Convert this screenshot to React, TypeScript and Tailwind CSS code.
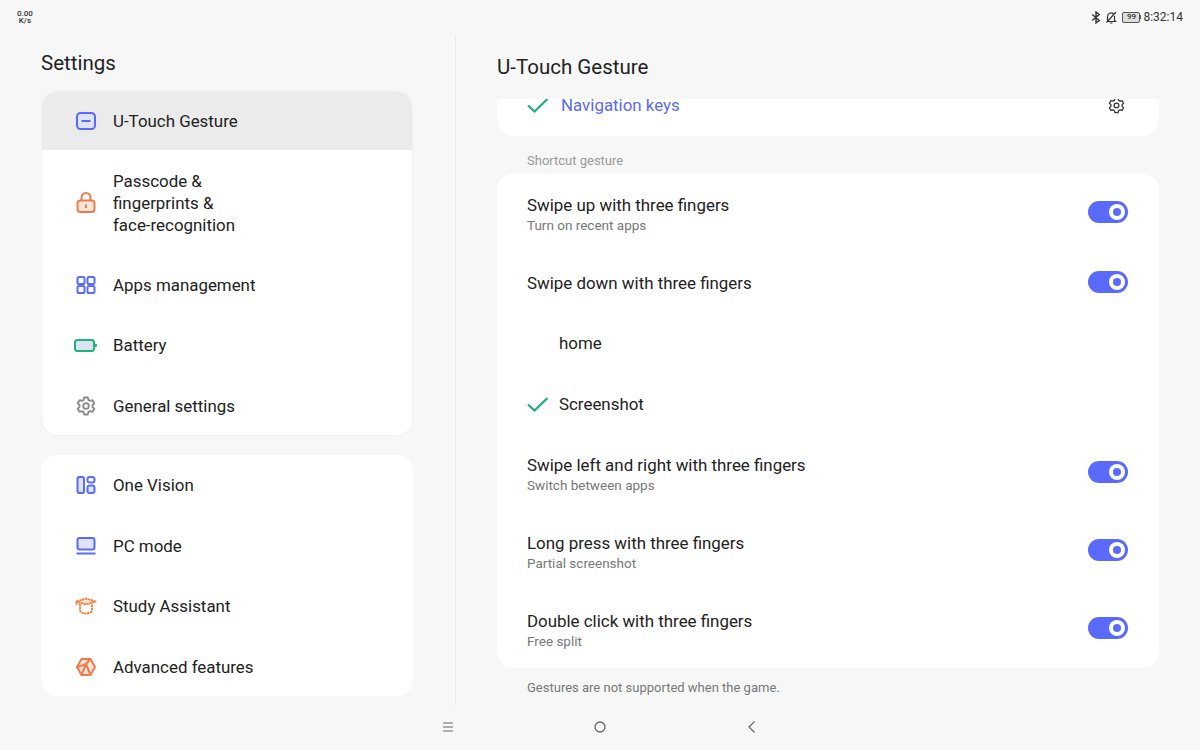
import React from 'react';

const BLUE = '#5a6bfb';

const IconGesture = () => (
  <svg width="20" height="18" viewBox="0 0 20 18" fill="none">
    <rect x="1" y="1" width="18" height="16" rx="3.5" fill="#dfe3fd" stroke={BLUE} strokeWidth="2" />
    <path d="M5.500 9h9" stroke={BLUE} strokeWidth="2" />
  </svg>
);

const IconLock = () => (
  <svg width="20" height="21" viewBox="0 0 20 21" fill="none">
    <path d="M5.500 9V5.500a4.500 4.500 0 0 1 9 0V9" stroke="#ee7b4d" strokeWidth="2" />
    <rect x="1.500" y="8.500" width="17" height="11.500" rx="3" fill="#fbe6d9" stroke="#ee7b4d" strokeWidth="2" />
    <path d="M10 12.500v3.500" stroke="#ee7b4d" strokeWidth="2" />
  </svg>
);

const IconApps = () => (
  <svg width="20" height="18" viewBox="0 0 20 18" fill="none" stroke={BLUE} strokeWidth="2">
    <rect x="1.500" y="1" width="7" height="7" rx="1.600" />
    <rect x="11.500" y="1" width="7" height="7" rx="1.600" />
    <rect x="1.500" y="10" width="7" height="7" rx="1.600" />
    <rect x="11.500" y="10" width="7" height="7" rx="1.600" />
  </svg>
);

const IconBattery = () => (
  <svg width="23" height="13" viewBox="0 0 23 13" fill="none">
    <rect x="1" y="1" width="19" height="11" rx="2.500" fill="#dde3ee" stroke="#21b07c" strokeWidth="2" />
    <path d="M21 4.500l2 1v2l-2 1z" fill="#21b07c" />
  </svg>
);

const IconGear = ({ color, size, sw }: { color: string; size: number; sw: number }) => (
  <svg width={size} height={size} viewBox="0 0 20 20" fill="none" stroke={color} strokeWidth={sw} strokeLinejoin="round">
    <path d="M8.200 1.500h3.600l.6 2.400 1.700 1 2.400-.7 1.800 3.100-1.800 1.700v2l1.800 1.700-1.800 3.100-2.400-.7-1.700 1-.6 2.400H8.200l-.6-2.400-1.700-1-2.400.7-1.800-3.100 1.800-1.700v-2L1.700 7.300l1.800-3.100 2.400.7 1.700-1z" />
    <circle cx="10" cy="10" r="2.800" />
  </svg>
);

const IconVision = () => (
  <svg width="20" height="18" viewBox="0 0 20 18" fill="none" stroke={BLUE} strokeWidth="2">
    <rect x="1.500" y="1" width="6.500" height="16" rx="1.800" fill="#dfe3fd" />
    <rect x="11.500" y="1" width="7" height="5.500" rx="2.200" />
    <rect x="11.500" y="9.500" width="7" height="7.500" rx="2" fill="#dfe3fd" />
  </svg>
);

const IconLaptop = () => (
  <svg width="20" height="18" viewBox="0 0 20 18" fill="none" stroke={BLUE} strokeWidth="2">
    <rect x="1.500" y="1" width="17" height="11.500" rx="2.200" fill="#dfe3fd" />
    <path d="M0.500 16.500h19" />
  </svg>
);

const IconStudy = () => (
  <svg width="22" height="18" viewBox="0 0 22 18" fill="none" stroke="#f2854a" strokeWidth="2" strokeDasharray="2.500 0.500" strokeLinejoin="round">
    <path d="M1.500 4.500L11 1.500l9.500 3-9.500 3z" fill="#fde6d6" />
    <path d="M5 6.500v6.300a3 3 0 0 0 1.500 2.500c2.800 1.600 6.200 1.600 9 0a3 3 0 0 0 1.500-2.500V6.500" />
    <path d="M1.500 4.500v4" />
  </svg>
);

const IconCube = () => (
  <svg width="20" height="18" viewBox="0 0 20 18" fill="none" stroke="#ee7b4d" strokeWidth="2" strokeLinejoin="round">
    <path d="M5.500 1h9L19 9l-4.500 8h-9L1 9z" fill="#fde6d6" />
    <path d="M1.500 9l8.500-3 4.500-5M10 6l4.500 11M10 6L5.500 17" />
  </svg>
);

const Check = () => (
  <svg width="22" height="15" viewBox="0 0 22 15" fill="none" className="shrink-0">
    <path d="M1 7.500l6.500 6L20.500 1" stroke="#1fae7a" strokeWidth="2.200" />
  </svg>
);

const Toggle = () => (
  <div className="-mt-[2px] flex h-[22px] w-10 items-center justify-end rounded-full bg-[#5a6bfb] pr-[3px]">
    <div className="flex h-4 w-4 items-center justify-center rounded-full bg-white">
      <div className="h-2 w-2 rounded-full bg-[#5a6bfb]" />
    </div>
  </div>
);

const NavRow = ({ icon, label, h, active }: { icon: React.ReactNode; label: React.ReactNode; h: string; active?: boolean }) => (
  <div className={`flex items-center ${h} ${active ? 'bg-[#ebebeb]' : ''}`}>
    <div className="flex w-[71px] shrink-0 items-center justify-center pl-[26px] pr-[10px]">{icon}</div>
    <div className="text-[16.900px] leading-[22px] text-[#222222]">{label}</div>
  </div>
);

const GestureRow = ({ title, sub, h }: { title: string; sub?: string; h: string }) => (
  <div className={`flex items-center justify-between pl-[30px] pr-[31px] ${h}`}>
    <div className={sub ? 'pt-[2px]' : ''}>
      <div className="text-[16.900px] leading-[22px] text-[#222222]">{title}</div>
      {sub && <div className="text-[13.500px] leading-[18px] text-[#777777]">{sub}</div>}
    </div>
    <Toggle />
  </div>
);

const App = () => {
  return (
    <div className="flex h-[750px] w-[1200px] flex-col overflow-hidden bg-[#f7f7f7] font-['Roboto',sans-serif]">
      <div className="flex h-[35px] shrink-0 items-start justify-between pl-[17px] pr-[17px] pt-[10px]">
        <div className="text-center text-[8px] font-medium leading-[7px] text-[#333333]">
          <div>0.00</div>
          <div>K/s</div>
        </div>
        <div className="flex h-[14px] items-center text-[#333333]">
          <svg width="10" height="13" viewBox="0 0 9 12" fill="none" stroke="#333333" strokeWidth="1.300">
            <path d="M1 3.200l6.500 5.600L4.500 11V1l3 2.200L1 8.800" />
          </svg>
          <svg width="12" height="13" viewBox="0 0 12 13" fill="none" stroke="#333333" strokeWidth="1.200" className="ml-[4px]">
            <path d="M2.500 9.500V5.500a3.500 3.500 0 0 1 6-2.500M9.500 5v4.500l1 1h-9M5 12h2.500M1.500 11.500L11 1" />
          </svg>
          <div className="ml-[5px] flex h-[11px] w-[18px] items-center justify-center rounded-[2px] border border-[#555555] bg-[#dddddd] text-[8px] font-medium leading-none">
            99
          </div>
          <div className="h-1 w-[1px] bg-[#555555]" />
          <div className="ml-[2px] text-[12px]">8:32:14</div>
        </div>
      </div>

      <div className="flex h-[670px] shrink-0">
        <div className="w-[456px] shrink-0 border-r border-[#ececec] pl-[41px] pr-[41px]">
          <div className="pt-[15px] text-[20.500px] leading-[26px] text-[#222222]">Settings</div>
          <div className="mr-[1px] mt-[15px] overflow-hidden rounded-2xl border border-[#f0f0f0] bg-white">
            <NavRow icon={<IconGesture />} label="U-Touch Gesture" h="h-[58px]" active />
            <NavRow icon={<IconLock />} label={<>Passcode &<br />fingerprints &<br />face-recognition</>} h="h-[105px]" />
            <NavRow icon={<IconApps />} label="Apps management" h="h-[60px]" />
            <NavRow icon={<IconBattery />} label="Battery" h="h-[60px]" />
            <NavRow icon={<IconGear color="#8a8a8a" size={20} sw={1.800} />} label="General settings" h="h-[60px] pt-[2px]" />
          </div>
          <div className="mr-[1px] mt-[19px] rounded-2xl border-x border-white bg-white">
            <NavRow icon={<IconVision />} label="One Vision" h="h-[60px]" />
            <NavRow icon={<IconLaptop />} label="PC mode" h="h-[61px]" />
            <NavRow icon={<IconStudy />} label="Study Assistant" h="h-[60px]" />
            <NavRow icon={<IconCube />} label="Advanced features" h="h-[60px] pt-[1px]" />
          </div>
        </div>

        <div className="flex-1 pl-[41px] pr-[41px]">
          <div className="pt-[19px] text-[20.500px] leading-[26px] text-[#222222]">U-Touch Gesture</div>
          <div className="mt-[19px] flex h-[37px] items-start justify-between overflow-hidden rounded-b-2xl bg-white pl-[30px] pr-[34px]">
            <div className="-mt-[1px] flex items-center">
              <Check />
              <div className="-mt-[2px] ml-3 text-[16.900px] leading-[14px] text-[#5a6bf0]">Navigation keys</div>
            </div>
            <div className="-mt-[2px]">
              <IconGear color="#333333" size={17} sw={1.500} />
            </div>
          </div>
          <div className="pl-[30px] pt-[17px] text-[13px] leading-[16px] text-[#999999]">Shortcut gesture</div>
          <div className="mt-[5px] rounded-2xl bg-white">
            <GestureRow title="Swipe up with three fingers" sub="Turn on recent apps" h="h-[78px]" />
            <GestureRow title="Swipe down with three fingers" h="h-[61px]" />
            <div className="flex h-[60px] items-center pl-[62px] pt-[2px] text-[16.900px] text-[#222222]">home</div>
            <div className="flex h-[61px] items-center pl-[30px] pt-[2px] text-[16.900px] text-[#222222]">
              <Check />
              <span className="ml-[10px]">Screenshot</span>
            </div>
            <GestureRow title="Swipe left and right with three fingers" sub="Switch between apps" h="h-[78px]" />
            <GestureRow title="Long press with three fingers" sub="Partial screenshot" h="h-[78px]" />
            <GestureRow title="Double click with three fingers" sub="Free split" h="h-[78px]" />
          </div>
          <div className="pl-[30px] pt-[11px] text-[13px] leading-[18px] text-[#777777]">Gestures are not supported when the game.</div>
        </div>
      </div>

      <div className="flex flex-1 items-start justify-center gap-[138px] pt-[15px]">
        <svg width="14" height="14" viewBox="0 0 14 14" fill="none" stroke="#666666" strokeWidth="1.200">
          <path d="M2 3h10M2 7h10M2 11h10" />
        </svg>
        <svg width="14" height="14" viewBox="0 0 14 14" fill="none" stroke="#666666" strokeWidth="1.300">
          <circle cx="7" cy="7" r="5" />
        </svg>
        <svg width="14" height="14" viewBox="0 0 14 14" fill="none" stroke="#666666" strokeWidth="1.200">
          <path d="M9.500 1.500L4 7l5.500 5.500" />
        </svg>
      </div>
    </div>
  );
};

export default App;
